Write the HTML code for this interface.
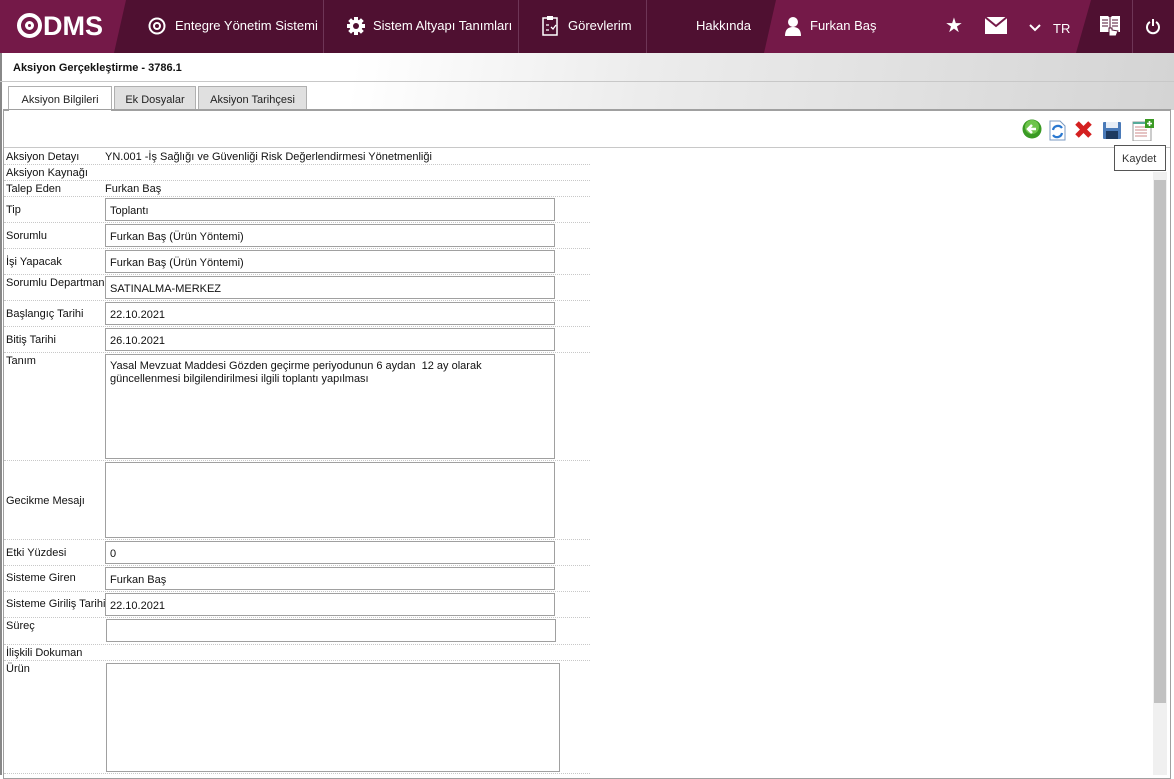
<!DOCTYPE html>
<html><head><meta charset="utf-8"><style>
*{margin:0;padding:0;box-sizing:border-box}
body{width:1174px;height:775px;overflow:hidden;background:#fff;font-family:"Liberation Sans",sans-serif;position:relative;color:#111}
.abs{position:absolute}
.hdr{left:0;top:0;width:1174px;height:53px;background:#4f1031}
.nav{color:#fff;font-size:13px;top:18px}
.vd{top:0;width:1px;height:53px;background:#6e3556}
.lbl{position:absolute;left:6px;font-size:11px;color:#111}
.inp{position:absolute;left:105px;width:450px;height:23px;border:1px solid #a0a0a0;font-size:11px;padding:6px 4px 0;background:#fff}
.sep{position:absolute;left:4px;width:586px;border-top:1px dotted #c8c8c8;height:0}
.tab{position:absolute;top:86px;height:24px;font-size:11px;text-align:center;padding-top:7px;border:1px solid #b0b0b0;border-bottom:none;background:#e0e0e0;color:#222}
</style></head><body>
<div class="abs hdr"></div>
<svg class="abs" style="left:0;top:0" width="1174" height="53">
<polygon points="0,0 126,0 114,53 0,53" fill="#741948"/>
<polygon points="776,0 1091,0 1076,53 764,53" fill="#741948"/>
</svg>
<div class="abs vd" style="left:323px"></div>
<div class="abs vd" style="left:518px"></div>
<div class="abs vd" style="left:646px"></div>
<div class="abs vd" style="left:1132px"></div>
<div class="abs" style="left:17px;top:11px;color:#fff;font-weight:bold;font-size:27px;letter-spacing:0px">
<span style="display:inline-block;width:25px;height:25px;border:4px solid #fff;border-radius:50%;vertical-align:-3px;margin-right:1px;position:relative"><span style="position:absolute;left:4px;top:4px;width:9px;height:9px;border:3px solid #fff;border-radius:50%"></span></span>DMS</div>
<svg class="abs" style="left:148px;top:17px" width="18" height="18"><circle cx="9" cy="9" r="7.5" fill="none" stroke="#fff" stroke-width="2"/><circle cx="9" cy="9" r="3" fill="none" stroke="#fff" stroke-width="2"/></svg>
<div class="abs nav" style="left:175px">Entegre Yönetim Sistemi</div>
<svg class="abs" style="left:346px;top:16px" width="20" height="20" viewBox="0 0 20 20"><g fill="#fff"><circle cx="10" cy="10" r="6.5"/><rect x="8" y="1" width="4" height="18"/><rect x="1" y="8" width="18" height="4"/><rect x="8" y="1" width="4" height="18" transform="rotate(45 10 10)"/><rect x="8" y="1" width="4" height="18" transform="rotate(-45 10 10)"/></g><circle cx="10" cy="10" r="3" fill="#4f1031"/></svg>
<div class="abs nav" style="left:373px">Sistem Altyapı Tanımları</div>
<svg class="abs" style="left:541px;top:15px" width="18" height="22"><rect x="2" y="3" width="14" height="17" fill="none" stroke="#fff" stroke-width="1.5"/><rect x="6" y="1" width="6" height="4" fill="#fff"/><path d="M5 10h3M5 15h3M10 12l2 2 3-4" stroke="#fff" fill="none" stroke-width="1.3"/></svg>
<div class="abs nav" style="left:568px">Görevlerim</div>
<div class="abs nav" style="left:696px">Hakkında</div>
<svg class="abs" style="left:784px;top:16px" width="18" height="20"><circle cx="9" cy="6" r="5" fill="#fff"/><path d="M1 20 Q1 11 9 11 Q17 11 17 20Z" fill="#fff"/></svg>
<div class="abs nav" style="left:810px">Furkan Baş</div>
<div class="abs" style="left:945px;top:13px;color:#fff;font-size:20px">★</div>
<svg class="abs" style="left:985px;top:17px" width="22" height="17"><rect width="22" height="17" fill="#fff"/><path d="M0 0 L11 9 L22 0" stroke="#741948" stroke-width="2" fill="none"/></svg>
<svg class="abs" style="left:1029px;top:24px" width="12" height="8"><path d="M1 1 L6 6 L11 1" stroke="#fff" stroke-width="2" fill="none"/></svg>
<div class="abs nav" style="left:1053px;top:21px;font-size:13px">TR</div>
<svg class="abs" style="left:1098px;top:14px" width="24" height="24"><path d="M2 2h8l2 2 2-2h8v16H2z" fill="#fff"/><path d="M12 4v14M4 6h6M4 9h6M4 12h6M14 6h6M14 9h6M14 12h6" stroke="#4f1031" stroke-width="1"/><path d="M11 14v8h7l2-5-6-1v-2z" fill="#fff" stroke="#4f1031"/></svg>
<svg class="abs" style="left:1145px;top:18px" width="16" height="17"><path d="M5 4 A6 6 0 1 0 11 4" stroke="#fff" stroke-width="2" fill="none"/><path d="M8 1v7" stroke="#fff" stroke-width="2"/></svg>

<div class="abs" style="left:0;top:53px;width:1174px;height:57px;background:linear-gradient(100deg,#fff 0%,#fff 30%,#ececec 55%,#d4d4d4 100%)"></div>
<div class="abs" style="left:0;top:53px;width:2px;height:722px;background:#888"></div>
<div class="abs" style="left:13px;top:62px;font-size:11px;font-weight:bold">Aksiyon Gerçekleştirme - 3786.1</div>
<div class="abs" style="left:0;top:81px;width:1174px;height:1px;background:#c8c8c8"></div>
<div class="tab" style="left:8px;width:104px;background:#fff;height:25px">Aksiyon Bilgileri</div>
<div class="tab" style="left:114px;width:82px">Ek Dosyalar</div>
<div class="tab" style="left:198px;width:109px">Aksiyon Tarihçesi</div>
<div class="abs" style="left:3px;top:109px;width:1168px;height:670px;border:1px solid #a0a0a0;border-top:2px solid #a0a0a0;background:#fff"></div>
<div class="abs" style="left:9px;top:110px;width:102px;height:2px;background:#fff"></div>
<div class="abs" style="left:4px;top:147px;width:1166px;height:1px;background:#c8c8c8"></div>
<div class="abs" style="left:1153px;top:172px;width:14px;height:603px;background:#f0f0f0"></div>
<div class="abs" style="left:1154px;top:180px;width:12px;height:523px;background:#c1c1c1"></div>

<svg class="abs" style="left:1022px;top:119px" width="140" height="22">
<circle cx="10" cy="10" r="9.5" fill="#3a9a24"/><circle cx="10" cy="8" r="7" fill="#6ec44c"/><path d="M14 10H7M10 6l-4 4 4 4" stroke="#fff" stroke-width="2.5" fill="none"/>
<path d="M28 2h10l5 5v14H28z" fill="#fff" stroke="#7a9ac0"/><path d="M31 11a5 5 0 0 1 9-2M40 14a5 5 0 0 1-9 2" stroke="#2a78d0" stroke-width="2.2" fill="none"/>
<path d="M55 4l13 13M68 4L55 17" stroke="#d42020" stroke-width="5"/>
<rect x="81" y="3" width="18" height="17" rx="1" fill="#4a7ab8"/><rect x="84" y="3" width="12" height="6" fill="#e8eef6"/><rect x="84" y="12" width="12" height="8" fill="#1e3a60"/>
<rect x="111" y="3" width="18" height="19" fill="#fff" stroke="#999"/><path d="M113 8h12M113 11h12M113 14h12M113 17h12" stroke="#c88"/><rect x="111" y="3" width="18" height="2" fill="#5a9"/><rect x="123" y="0" width="9" height="9" fill="#3a9a24"/><path d="M127.5 2v5M125 4.5h5" stroke="#fff" stroke-width="1.6"/>
</svg>
<div class="abs" style="left:1114px;top:145px;width:52px;height:26px;border:1px solid #555;background:#fff;font-size:11px;padding:7px 0 0 7px;color:#333">Kaydet</div>

<div class="lbl" style="top:151px">Aksiyon Detayı</div><div class="abs" style="left:105px;top:151px;font-size:11px">YN.001 -İş Sağlığı ve Güvenliği Risk Değerlendirmesi Yönetmenliği</div>
<div class="sep" style="top:164px"></div>
<div class="lbl" style="top:167px">Aksiyon Kaynağı</div>
<div class="sep" style="top:180px"></div>
<div class="lbl" style="top:183px">Talep Eden</div><div class="abs" style="left:105px;top:183px;font-size:11px">Furkan Baş</div>
<div class="sep" style="top:196px"></div>
<div class="lbl" style="top:204px">Tip</div><div class="inp" style="top:198px">Toplantı</div>
<div class="sep" style="top:222px"></div>
<div class="lbl" style="top:230px">Sorumlu</div><div class="inp" style="top:224px">Furkan Baş (Ürün Yöntemi)</div>
<div class="sep" style="top:248px"></div>
<div class="lbl" style="top:256px">İşi Yapacak</div><div class="inp" style="top:250px">Furkan Baş (Ürün Yöntemi)</div>
<div class="sep" style="top:274px"></div>
<div class="lbl" style="top:277px">Sorumlu Departman</div><div class="inp" style="top:276px">SATINALMA-MERKEZ</div>
<div class="sep" style="top:300px"></div>
<div class="lbl" style="top:308px">Başlangıç Tarihi</div><div class="inp" style="top:302px">22.10.2021</div>
<div class="sep" style="top:326px"></div>
<div class="lbl" style="top:334px">Bitiş Tarihi</div><div class="inp" style="top:328px">26.10.2021</div>
<div class="sep" style="top:352px"></div>
<div class="lbl" style="top:355px">Tanım</div><div class="inp" style="top:354px;height:105px;padding-top:5px;line-height:13px">Yasal Mevzuat Maddesi Gözden geçirme periyodunun 6 aydan &nbsp;12 ay olarak<br>güncellenmesi bilgilendirilmesi ilgili toplantı yapılması</div>
<div class="sep" style="top:460px"></div>
<div class="lbl" style="top:495px">Gecikme Mesajı</div><div class="inp" style="top:462px;height:76px"></div>
<div class="sep" style="top:539px"></div>
<div class="lbl" style="top:547px">Etki Yüzdesi</div><div class="inp" style="top:541px">0</div>
<div class="sep" style="top:565px"></div>
<div class="lbl" style="top:572px">Sisteme Giren</div><div class="inp" style="top:567px">Furkan Baş</div>
<div class="sep" style="top:591px"></div>
<div class="lbl" style="top:598px">Sisteme Giriliş Tarihi</div><div class="inp" style="top:593px">22.10.2021</div>
<div class="sep" style="top:617px"></div>
<div class="lbl" style="top:620px">Süreç</div><div class="inp" style="top:619px;left:106px;height:23px"></div>
<div class="sep" style="top:644px"></div>
<div class="lbl" style="top:647px">İlişkili Dokuman</div>
<div class="sep" style="top:660px"></div>
<div class="lbl" style="top:663px">Ürün</div><div class="inp" style="top:663px;left:106px;width:454px;height:109px"></div>
<div class="sep" style="top:773px"></div>
</body></html>
